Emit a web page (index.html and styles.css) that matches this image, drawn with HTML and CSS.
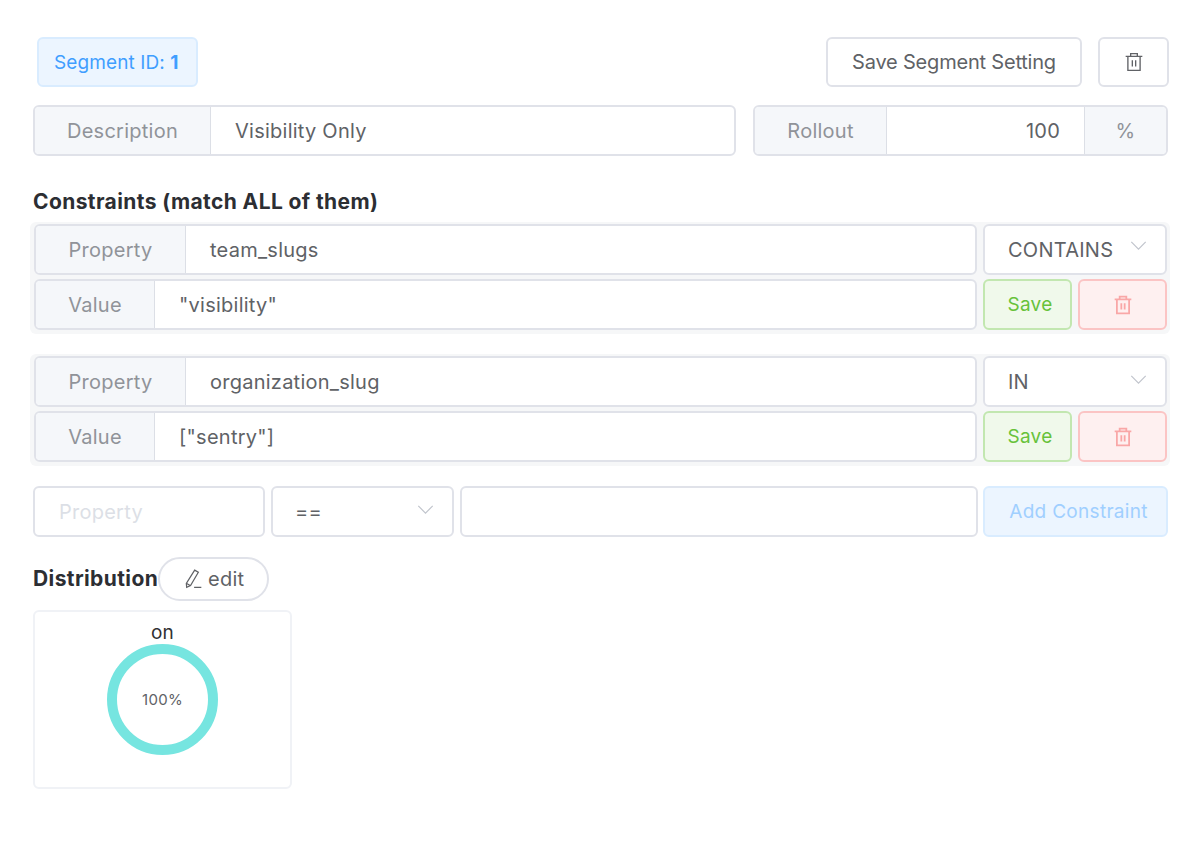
FILE: index.html
```html
<!DOCTYPE html>
<html lang="en">
<head>
<meta charset="utf-8">
<title>Segment</title>
<link rel="stylesheet" href="styles.css">
</head>
<body>
<main class="page">
  <div class="top-row">
    <span class="tag">Segment ID:&nbsp;<b>1</b></span>
    <div class="top-actions">
      <button class="btn btn-save-seg">Save Segment Setting</button>
      <button class="btn btn-icon">
        <svg class="trash" viewBox="0 0 18 18"><path d="M1.500 4h15M6 4V1.500h6V4M3.500 4v12.500h11V4M7.500 7.500v5.500M10.500 7.500v5.500"/></svg>
      </button>
    </div>
  </div>

  <div class="meta-row">
    <div class="group group-desc">
      <span class="addon addon-desc">Description</span>
      <span class="field">Visibility Only</span>
    </div>
    <div class="group group-rollout">
      <span class="addon addon-rollout">Rollout</span>
      <span class="field field-num">100</span>
      <span class="addon addon-pct">%</span>
    </div>
  </div>

  <h2 class="heading heading-constraints">Constraints (match ALL of them)</h2>

  <section class="constraint">
    <div class="c-row">
      <div class="group group-main">
        <span class="addon addon-prop">Property</span>
        <span class="field">team_slugs</span>
      </div>
      <div class="select select-op"><span>CONTAINS</span><svg class="chev chev-tight" viewBox="0 0 18 10"><path d="M1 1l8 8 8-8"/></svg></div>
    </div>
    <div class="c-row">
      <div class="group group-main">
        <span class="addon addon-val">Value</span>
        <span class="field">"visibility"</span>
      </div>
      <div class="c-actions">
        <button class="btn btn-success">Save</button>
        <button class="btn btn-danger"><svg class="trash" viewBox="0 0 18 18"><path d="M1.500 4h15M6 4V1.500h6V4M3.500 4v12.500h11V4M7.500 7.500v5.500M10.500 7.500v5.500"/></svg></button>
      </div>
    </div>
  </section>

  <section class="constraint">
    <div class="c-row">
      <div class="group group-main">
        <span class="addon addon-prop">Property</span>
        <span class="field">organization_slug</span>
      </div>
      <div class="select select-op"><span>IN</span><svg class="chev" viewBox="0 0 18 10"><path d="M1 1l8 8 8-8"/></svg></div>
    </div>
    <div class="c-row">
      <div class="group group-main">
        <span class="addon addon-val">Value</span>
        <span class="field">["sentry"]</span>
      </div>
      <div class="c-actions">
        <button class="btn btn-success">Save</button>
        <button class="btn btn-danger"><svg class="trash" viewBox="0 0 18 18"><path d="M1.500 4h15M6 4V1.500h6V4M3.500 4v12.500h11V4M7.500 7.500v5.500M10.500 7.500v5.500"/></svg></button>
      </div>
    </div>
  </section>

  <div class="add-row">
    <span class="input input-prop placeholder">Property</span>
    <div class="select select-new"><span class="eq">==</span><svg class="chev" viewBox="0 0 18 10"><path d="M1 1l8 8 8-8"/></svg></div>
    <span class="input input-val"></span>
    <button class="btn btn-add">Add Constraint</button>
  </div>

  <div class="dist-head">
    <h2 class="heading">Distribution</h2>
    <button class="btn btn-edit">
      <svg class="pencil" viewBox="0 0 18 18"><path d="M10.500 1l3.300 1.900-7 12-3.500 1.600-.3-3.600zM3 12.900l3.800 2.100M10 16.500h6.500"/></svg>
      <span>edit</span>
    </button>
  </div>

  <div class="dist-card">
    <div class="dist-label">on</div>
    <div class="ring"><span>100%</span></div>
  </div>
</main>
</body>
</html>
```
FILE: styles.css
```css
* { box-sizing: border-box; }
html, body { margin: 0; padding: 0; background: #fff; }
body {
  font-family: Inter, "Liberation Sans", sans-serif;
  font-size: 20px;
  letter-spacing: .25px;
  color: #606266;
  height: 844px;
  overflow: hidden;
}
.page { padding: 37px 32px 0 33px; }
button { font-family: inherit; font-size: 20px; letter-spacing: inherit; cursor: pointer; background: #fff; }

.top-row { display: flex; justify-content: space-between; padding-left: 4px; }
.tag {
  display: flex; align-items: center; width: 161px; height: 50px; padding-left: 15px;
  background: #ecf5ff; border: 2px solid #d9ecff; border-radius: 6px; color: #409eff; font-size: 19px; letter-spacing: .1px;
}
.top-actions { display: flex; gap: 16px; margin-right: -1px; }
.btn {
  display: flex; align-items: center; justify-content: center; height: 50px; padding: 0;
  border: 2px solid #e0e2e9; border-radius: 6px; color: #606266;
}
.btn-save-seg { width: 256px; letter-spacing: -.2px; }
.btn-icon { width: 71px; }
.trash { width: 20px; height: 20px; fill: none; stroke: currentColor; stroke-width: 1.200; }

.group { display: flex; height: 51px; border: 2px solid #e0e2e9; border-radius: 6px; overflow: hidden; background: #fff; }
.addon {
  display: flex; align-items: center; justify-content: center; flex: none; height: 100%;
  background: #f5f7fa; color: #909399;
}
.field { flex: 1; display: flex; align-items: center; padding-left: 24px; }
.meta-row { display: flex; gap: 17px; margin-top: 18px; }
.group-desc { width: 703px; }
.group-rollout { width: 415px; }
.addon-desc { width: 176px; border-right: 1px solid #dcdfe6; }
.addon-rollout { width: 132px; border-right: 1px solid #dcdfe6; }
.addon-pct { width: 82px; border-left: 1px solid #dcdfe6; }
.field-num { justify-content: flex-end; padding: 0 24px 0 0; }

.heading { margin: 0; font-size: 21px; letter-spacing: .4px; font-weight: 700; line-height: 24px; color: #2c2e33; }
.heading-constraints { margin-top: 34px; }

.constraint {
  margin: 8px -2px 0 -3px; padding: 2px 3px 4px 4px; width: 1140px;
  background: #f6f7f8; border-radius: 6px;
}
.constraint + .constraint { margin-top: 20px; }
.c-row { display: flex; gap: 6px; }
.c-row + .c-row { margin-top: 4px; }
.group-main { width: 943px; }
.addon-prop { width: 150px; border-right: 1px solid #dcdfe6; }
.addon-val { width: 119px; border-right: 1px solid #dcdfe6; }
.select {
  display: flex; align-items: center; justify-content: space-between;
  width: 184px; height: 51px; padding-left: 23px; background: #fff;
  border: 2px solid #e0e2e9; border-radius: 6px;
}
.chev { width: 17px; height: 9px; margin: 0 18px 4px 0; fill: none; stroke: #c0c4cc; stroke-width: 1.300; }
.chev-tight { margin: 0 18px 8px 0; }
.c-actions { display: flex; gap: 6px; }
.btn-success { width: 89px; height: 51px; background: #f0f9eb; border-color: #c2e7b0; color: #67c23a; padding-left: 5px; font-size: 19px; }
.btn-danger { width: 89px; height: 51px; background: #fef0f0; border-color: #fbc4c4; color: #f9a7a7; }
.btn-danger .trash { stroke-width: 1.600; }

.add-row { display: flex; gap: 6px; margin-top: 20px; }
.input { display: flex; align-items: center; height: 51px; padding-left: 24px; border: 2px solid #e0e2e9; border-radius: 6px; }
.input-prop { width: 232px; }
.placeholder { color: #dcdfe6; }
.select-new { width: 183px; }
.eq { margin-left: -1px; }
.input-val { width: 518px; }
.btn-add {
  width: 185px; height: 51px; margin-left: -1px; background: #ecf5ff; border-color: #d9ecff;
  color: #a0cfff; padding-left: 6px; font-size: 19px; letter-spacing: .3px;
}

.dist-head { display: flex; align-items: center; margin-top: 20px; }
.btn-edit { width: 111px; height: 44px; gap: 5px; border-radius: 22px; }
.pencil { width: 20px; height: 20px; fill: none; stroke: #606266; stroke-width: 1.100; }
.dist-card {
  display: flex; flex-direction: column; align-items: center; width: 259px; height: 179px; margin-top: 9px;
  border: 2px solid #f0f2f6; border-radius: 6px;
}
.dist-label { margin-top: 8px; font-size: 19px; line-height: 25px; color: #303133; }
.ring {
  display: flex; align-items: center; justify-content: center; width: 111px; height: 111px; margin-top: -1px;
  border: 10px solid #76e5e0; border-radius: 50%; font-size: 15px; color: #606266;
}
```
